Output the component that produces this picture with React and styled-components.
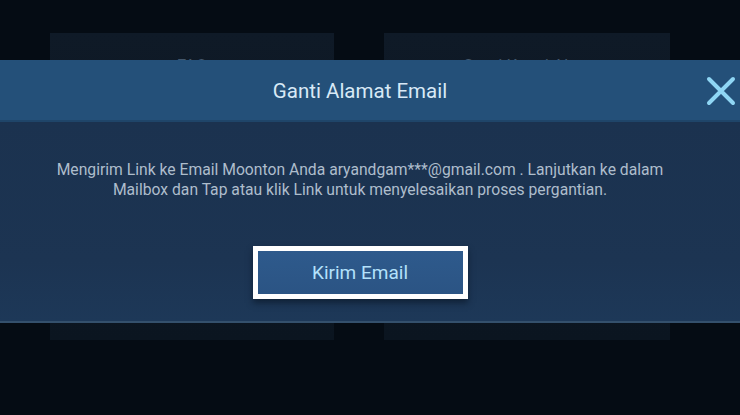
import styled, { createGlobalStyle } from "styled-components";

const Global = createGlobalStyle`
  html, body {
    margin: 0;
    padding: 0;
    background: #050c14;
  }
  body {
    font-family: Roboto, "Noto Sans", "Liberation Sans", sans-serif;
  }
`;

const Screen = styled.div`
  position: relative;
  width: 740px;
  height: 415px;
  overflow: hidden;
  background: #050c14;
`;

const Menu = styled.div`
  display: flex;
  gap: 50px;
  padding: 33px 0 0 50px;
`;

const MenuCard = styled.div`
  width: ${(p) => p.$w}px;
  height: 307px;
  display: flex;
  justify-content: center;
  padding-top: 22px;
  box-sizing: border-box;
  background: linear-gradient(180deg, #0f1a27, #0b1520);
  color: #42566b;
  font-size: 17px;
`;

const Overlay = styled.div`
  position: absolute;
  top: 60px;
  left: 0;
  right: 0;
  display: flex;
  flex-direction: column;
`;

const Header = styled.div`
  position: relative;
  height: 62px;
  display: flex;
  align-items: center;
  justify-content: center;
  padding-right: 20px;
  background: #245079;
  box-shadow: inset 0 -2px 0 #1f4569;
`;

const Title = styled.h2`
  margin: 0;
  font-weight: 400;
  font-size: 20.5px;
  color: #d8e9f6;
`;

const Close = styled.button`
  position: absolute;
  right: 4px;
  top: 16px;
  width: 30px;
  height: 30px;
  padding: 0;
  border: none;
  background: transparent;
  cursor: pointer;
`;

const Body = styled.div`
  height: 201px;
  display: flex;
  flex-direction: column;
  align-items: center;
  padding: 38px 20px 0 0;
  box-sizing: border-box;
  background: linear-gradient(180deg, #1b324f 0%, #1c3452 70%, #1d3858 100%);
  border-bottom: 2px solid #34506c;
`;

const Message = styled.p`
  margin: 0;
  width: 630px;
  text-align: center;
  font-size: 15.7px;
  line-height: 20px;
  color: #aebdcc;
`;

const ButtonFrame = styled.div`
  margin-top: 46px;
  padding: 5px;
  background: #ffffff;
  box-shadow: 0 4px 6px rgba(8, 20, 35, 0.6);
`;

const SendButton = styled.button`
  width: 205px;
  height: 43px;
  border: none;
  background: linear-gradient(180deg, #2e5a8c, #2b5484);
  color: #b3e1fb;
  font-family: inherit;
  font-size: 19px;
  cursor: pointer;
`;

export default function App() {
  return (
    <Screen>
      <Global />
      <Menu>
        <MenuCard $w={284}>FAQ</MenuCard>
        <MenuCard $w={286}>Ganti Kunci Akun</MenuCard>
      </Menu>
      <Overlay>
        <Header>
          <Title>Ganti Alamat Email</Title>
          <Close aria-label="Tutup">
            <svg width="30" height="30" viewBox="0 0 30 30">
              <path
                d="M3 3 L27 27 M27 3 L3 27"
                stroke="#8fd6f4"
                strokeWidth="4"
                strokeLinecap="round"
              />
            </svg>
          </Close>
        </Header>
        <Body>
          <Message>
            Mengirim Link ke Email Moonton Anda aryandgam***@gmail.com . Lanjutkan ke dalam
            Mailbox dan Tap atau klik Link untuk menyelesaikan proses pergantian.
          </Message>
          <ButtonFrame>
            <SendButton>Kirim Email</SendButton>
          </ButtonFrame>
        </Body>
      </Overlay>
    </Screen>
  );
}
